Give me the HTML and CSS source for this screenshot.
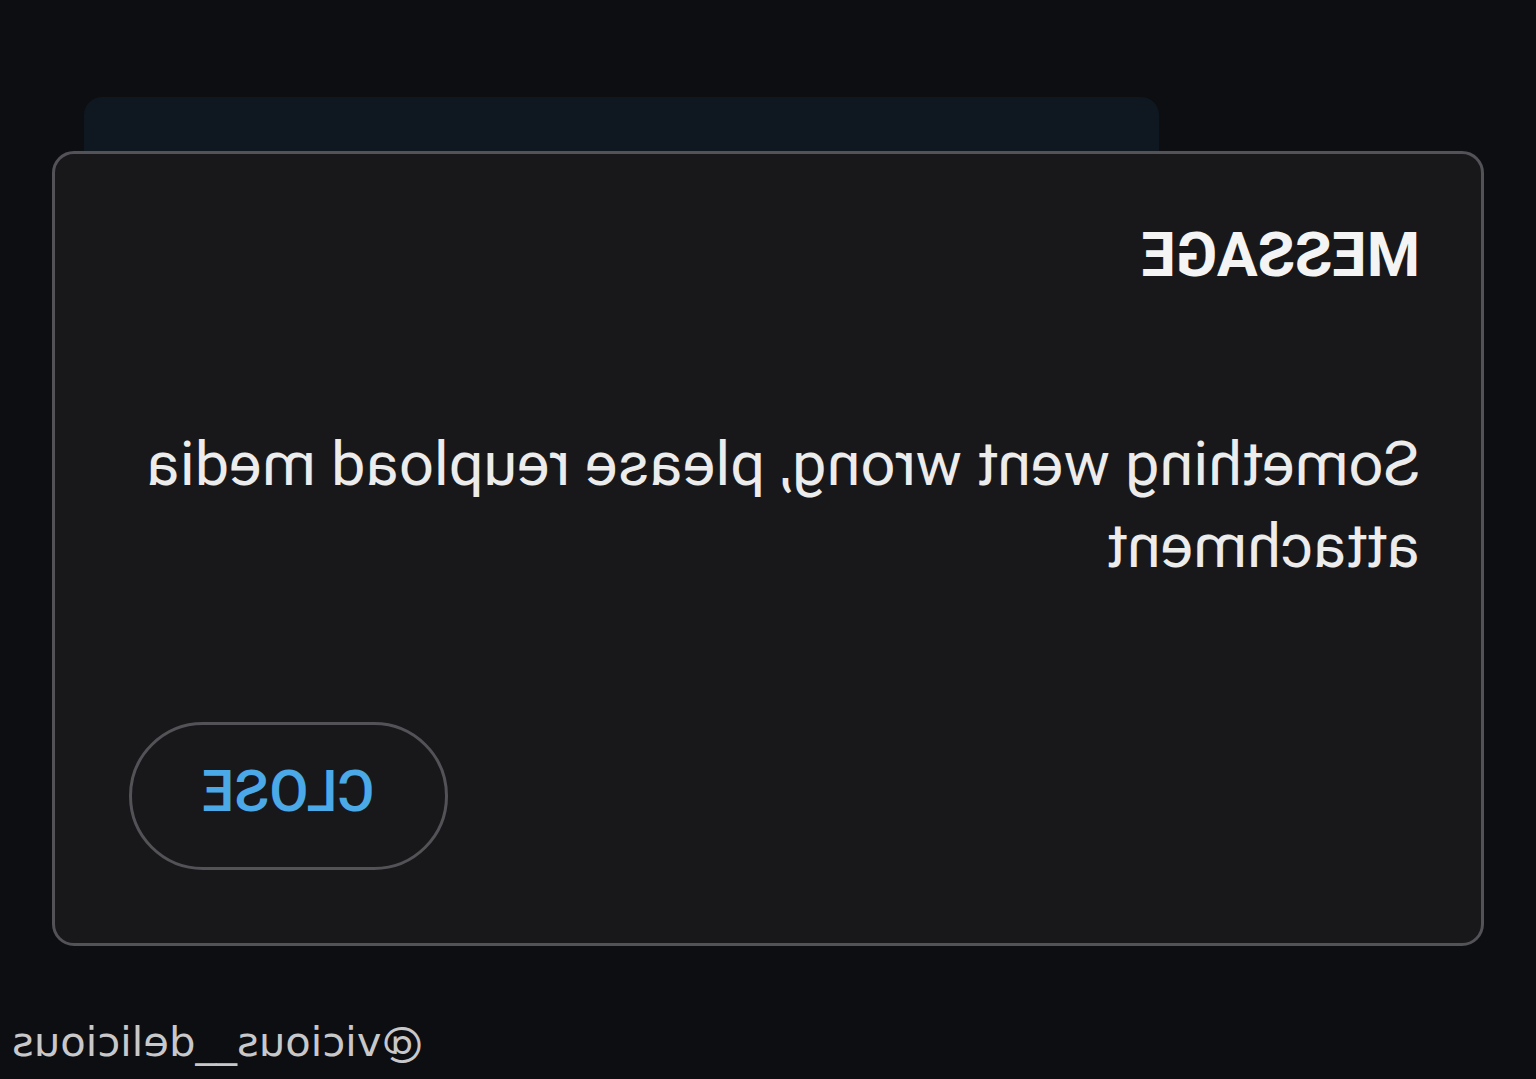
FILE: index.html
```html
<!DOCTYPE html>
<html lang="en">
<head>
<meta charset="utf-8">
<title>Message</title>
<link rel="stylesheet" href="styles.css">
</head>
<body>
<div class="screen">
  <div class="bg-card"></div>
  <div class="footer">@vicious__delicious</div>
  <div class="dialog" role="dialog">
    <h2 class="dialog-title">MESSAGE</h2>
    <p class="dialog-text">Something went wrong, please reupload media attachment</p>
    <button class="dialog-btn">CLOSE</button>
  </div>
</div>
</body>
</html>
```

FILE: styles.css
```css
html, body {
  margin: 0;
  padding: 0;
  background: #0d0e11;
}
.screen {
  width: 1536px;
  height: 1079px;
  position: relative;
  overflow: hidden;
  transform: scaleX(-1);
  display: flex;
  flex-direction: column;
  background: #0d0e11;
}
.bg-card {
  margin: 97px 84px 0 377px;
  height: 140px;
  background: #0f1820;
  border-radius: 18px;
}
.footer {
  margin-top: auto;
  padding: 0 12px 13px 0;
  text-align: right;
  font-family: "DejaVu Sans", sans-serif;
  font-size: 41.7px;
  line-height: 48px;
  color: #c8c8ca;
}
.dialog {
  position: absolute;
  left: 52px;
  top: 151px;
  width: 1432px;
  height: 795px;
  box-sizing: border-box;
  border: 3px solid #525257;
  border-radius: 22px;
  background: #18181b;
  padding: 71px 63px 0 61px;
  display: flex;
  flex-direction: column;
  font-family: Roboto, "Liberation Sans", sans-serif;
}
.dialog-title {
  margin: 0;
  font-size: 60.8px;
  line-height: 62px;
  font-weight: 700;
  color: #f4f4f4;
}
.dialog-text {
  margin: 136px 0 0 0;
  font-size: 61.4px;
  line-height: 82px;
  font-weight: 400;
  color: #ececec;
}
.dialog-btn {
  margin: 135px 11px 0 0;
  align-self: flex-end;
  width: 319px;
  height: 148px;
  box-sizing: border-box;
  border: 3px solid #525257;
  border-radius: 74px;
  background: transparent;
  color: #4aa9e6;
  font-family: Roboto, "Liberation Sans", sans-serif;
  font-size: 57px;
  font-weight: 500;
  padding: 0 0 10px 0;
}
```
